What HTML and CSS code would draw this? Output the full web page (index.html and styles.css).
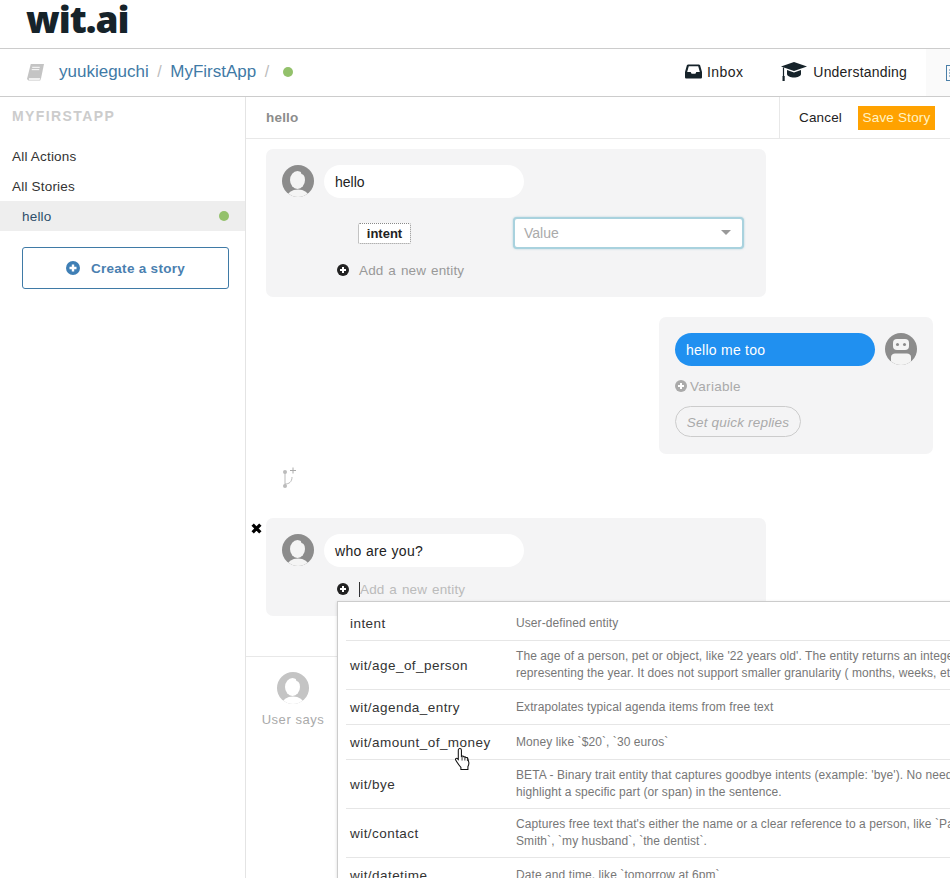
FILE: index.html
```html
<!DOCTYPE html>
<html lang="en">
<head>
<meta charset="utf-8">
<title>wit.ai</title>
<link rel="stylesheet" href="styles.css">
</head>
<body>
<header class="top"><span class="logo">wit.ai</span></header>
<nav class="subnav">
  <svg class="book" viewBox="0 0 20 18"><path d="M5 0h14l-3 14.500-1 3H2.500L1 16z" fill="#c4c4c4"/><path d="M3 15h12l-.6 1.800H3z" fill="#fff"/><path d="M6.500 3.500h8M6 6h8" stroke="#fff" stroke-width="1"/></svg>
  <a class="crumb">yuukieguchi</a><span class="slash">/</span><a class="crumb">MyFirstApp</a><span class="slash">/</span><span class="dot crumb-dot"></span>
  <div class="tabs">
    <span class="tab tab-inbox"><svg class="ic-inbox" viewBox="0 0 18 15"><path fill-rule="evenodd" d="M3.500 0h11c.7 0 1.200.4 1.500 1l2 7v5.500c0 .9-.6 1.500-1.500 1.500h-15C.6 15 0 14.400 0 13.500V8l2-7c.3-.6.800-1 1.500-1zM4 2 2.300 8H6l1 2h4l1-2h3.700L14 2z" fill="#16232a"/></svg>Inbox</span>
    <span class="tab tab-under"><svg class="ic-cap" viewBox="0 0 26 19"><path d="M13 0 26 4.500 13 9 0 4.500z" fill="#16232a"/><path d="M6 8v4c0 2 3.500 3.500 7 3.500s7-1.500 7-3.500V8l-7 2.500z" fill="#16232a"/><path d="M2.500 5.500v9" stroke="#16232a" stroke-width="1.200"/><rect x="1.500" y="14" width="2.200" height="5" fill="#16232a"/></svg>Understanding</span>
    <span class="tab-next"><svg class="ic-next" viewBox="0 0 12 16"><rect x=".5" y=".5" width="11" height="15" fill="none" stroke="#4a7fa8"/><path d="M3 5h3M3 8h6M3 11h4" stroke="#4a7fa8"/></svg></span>
  </div>
</nav>
<div class="layout">
  <aside class="side">
    <h2 class="app-name">MYFIRSTAPP</h2>
    <a class="side-link">All Actions</a>
    <a class="side-link">All Stories</a>
    <a class="side-link side-active"><span>hello</span><span class="dot"></span></a>
    <button class="create"><svg class="ic-plus" viewBox="0 0 14 14"><circle cx="7" cy="7" r="7" fill="#3f7fb5"/><path d="M7 3.500v7M3.500 7h7" stroke="#fff" stroke-width="2.400"/></svg>Create a story</button>
  </aside>
  <main class="main">
    <div class="story-head">
      <span class="story-title">hello</span>
      <div class="story-actions"><button class="cancel">Cancel</button><button class="save">Save Story</button></div>
    </div>
    <div class="story">
      <section class="card card-user">
        <div class="say">
          <svg class="avatar" viewBox="0 0 32 32"><defs><clipPath id="c1"><circle cx="16" cy="16" r="16"/></clipPath></defs><circle cx="16" cy="16" r="16" fill="#8c8c8c"/><g clip-path="url(#c1)"><ellipse cx="16" cy="32" rx="11" ry="7.500" fill="#f4f4f4"/><ellipse cx="15.500" cy="15" rx="7.500" ry="9" fill="#f4f4f4"/><circle cx="22" cy="6.500" r="3.200" fill="#8c8c8c"/></g></svg>
          <div class="chip">hello</div>
        </div>
        <div class="entity-row">
          <span class="tag">intent</span>
          <div class="value"><span>Value</span><i class="caret"></i></div>
        </div>
        <div class="add"><svg class="ic-add" viewBox="0 0 12 12"><circle cx="6" cy="6" r="6" fill="#222"/><path d="M6 3v6M3 6h6" stroke="#fff" stroke-width="2"/></svg><span class="add-text">Add a new entity</span></div>
      </section>
      <section class="card card-bot">
        <div class="reply">
          <div class="bubble">hello me too</div>
          <svg class="avatar" viewBox="0 0 32 32"><defs><clipPath id="c2"><circle cx="16" cy="16" r="16"/></clipPath></defs><circle cx="16" cy="16" r="16" fill="#8c8c8c"/><g clip-path="url(#c2)"><rect x="8" y="6" width="16" height="11" rx="4" fill="#f4f4f4"/><circle cx="12.500" cy="11.500" r="1.500" fill="#8c8c8c"/><circle cx="19.500" cy="11.500" r="1.500" fill="#8c8c8c"/><path d="M6 33V24c0-2 2-3.500 4-3.500h12c2 0 4 1.500 4 3.500v9z" fill="#f4f4f4"/></g></svg>
        </div>
        <div class="variable"><svg class="ic-add" viewBox="0 0 12 12"><circle cx="6" cy="6" r="6" fill="#aaa"/><path d="M6 3v6M3 6h6" stroke="#fff" stroke-width="2"/></svg>Variable</div>
        <button class="quick">Set quick replies</button>
      </section>
      <svg class="branch" viewBox="0 0 16 24"><circle cx="3" cy="6" r="2" fill="#bbb"/><circle cx="3" cy="20" r="2" fill="#bbb"/><path d="M3 6v14M3 18c4 0 7-2 7-7" stroke="#bbb" fill="none"/><path d="M11 1.500v6M8 4.500h6" stroke="#aaa" fill="none"/></svg>
      <section class="card card-user card-open">
        <svg class="close" viewBox="0 0 10 10"><path d="M1.500 1.500l7 7M8.500 1.500l-7 7" stroke="#000" stroke-width="3"/></svg>
        <div class="say">
          <svg class="avatar" viewBox="0 0 32 32"><defs><clipPath id="c3"><circle cx="16" cy="16" r="16"/></clipPath></defs><circle cx="16" cy="16" r="16" fill="#8c8c8c"/><g clip-path="url(#c3)"><ellipse cx="16" cy="32" rx="11" ry="7.500" fill="#f4f4f4"/><ellipse cx="15.500" cy="15" rx="7.500" ry="9" fill="#f4f4f4"/><circle cx="22" cy="6.500" r="3.200" fill="#8c8c8c"/></g></svg>
          <div class="chip chip-q">who are you?</div>
        </div>
        <div class="add add-open"><svg class="ic-add" viewBox="0 0 12 12"><circle cx="6" cy="6" r="6" fill="#222"/><path d="M6 3v6M3 6h6" stroke="#fff" stroke-width="2"/></svg><i class="text-cursor"></i><span class="add-text add-faint">Add a new entity</span></div>
        <div class="menu">
          <div class="row row-1"><b>intent</b><p>User-defined entity</p></div>
          <div class="row"><b>wit/age_of_person</b><p>The age of a person, pet or object, like '22 years old'. The entity returns an integer representing the year. It does not support smaller granularity ( months, weeks, etc.)</p></div>
          <div class="row"><b>wit/agenda_entry</b><p>Extrapolates typical agenda items from free text</p></div>
          <div class="row"><b>wit/amount_of_money</b><p>Money like `$20`, `30 euros`</p></div>
          <div class="row"><b>wit/bye</b><p>BETA - Binary trait entity that captures goodbye intents (example: 'bye'). No need to highlight a specific part (or span) in the sentence.</p></div>
          <div class="row"><b>wit/contact</b><p>Captures free text that's either the name or a clear reference to a person, like `Paul Smith`, `my husband`, `the dentist`.</p></div>
          <div class="row"><b>wit/datetime</b><p>Date and time, like `tomorrow at 6pm`</p></div>
        </div>
        <svg class="hand" viewBox="1 1 15 22"><path d="M5.500 1.500c1 0 1.500.7 1.500 1.600V9l.6-.3c.9-.2 1.500.2 1.700.8.800-.4 1.600-.1 1.900.6.800-.3 1.700.1 1.900.9l.9 3.500c.3 1.500 0 3-.8 4.300v2.700H6.500v-2C5 18 3 15 1.500 12.500c-.6-1 .5-2.100 1.600-1.400L4 12V3.100c0-.9.500-1.600 1.500-1.600z" fill="#fff" stroke="#111" stroke-width="1"/><path d="M7.600 9v4M10.300 9.500v3.500M12.700 10.500v3" stroke="#111" stroke-width=".8"/></svg>
      </section>
    </div>
    <div class="palette">
      <svg class="avatar" viewBox="0 0 32 32"><defs><clipPath id="c4"><circle cx="16" cy="16" r="16"/></clipPath></defs><circle cx="16" cy="16" r="16" fill="#c4c4c4"/><g clip-path="url(#c4)"><ellipse cx="16" cy="32" rx="11" ry="7.500" fill="#fff"/><ellipse cx="15.500" cy="15" rx="7.500" ry="9" fill="#fff"/><circle cx="22" cy="6.500" r="3.200" fill="#c4c4c4"/></g></svg>
      <span class="palette-label">User says</span>
    </div>
  </main>
</div>
</body>
</html>
```
FILE: styles.css
```css
* { box-sizing: border-box; }
html, body { margin: 0; height: 878px; overflow: hidden; background: #fff; }
body { font-family: "Liberation Sans", Arial, sans-serif; font-size: 14px; color: #222; }
button { font-family: inherit; cursor: pointer; }
p { margin: 0; }

.top { height: 49px; border-bottom: 1px solid #ccc; padding-left: 26px; }
.logo { display: block; font-family: "Open Sans", sans-serif; font-weight: 800; font-size: 37px; line-height: 38px; color: #16232a; letter-spacing: -1px; }

.subnav { height: 48px; border-bottom: 1px solid #ccc; display: flex; align-items: center; padding: 0 0 0 26px; font-size: 17px; }
.book { width: 19px; height: 17px; margin-right: 14px; }
.crumb { color: #3f7aa6; margin-bottom: 2px; }
.slash { color: #bbb; margin: 0 8.500px 2px; font-size: 16px; }
.dot { display: inline-block; width: 10px; height: 10px; border-radius: 50%; background: #93c16b; }
.crumb-dot { margin-left: 5px; margin-bottom: 1px; }
.tabs { margin-left: auto; display: flex; align-items: center; align-self: stretch; font-size: 14px; color: #222; }
.tab { display: flex; align-items: center; margin-bottom: 2px; }
.tab-inbox { margin-right: 38px; letter-spacing: .4px; }
.tab-under { margin-right: 19px; letter-spacing: .2px; }
.ic-inbox { width: 17px; height: 15px; margin-right: 5px; }
.ic-cap { width: 26px; height: 19px; margin-right: 6px; }
.tab-next { width: 24px; align-self: stretch; background: #fafafa; padding-left: 20px; display: flex; align-items: center; overflow: hidden; }
.ic-next { width: 12px; height: 16px; flex: none; }

.layout { display: flex; height: 781px; }
.side { width: 246px; flex: none; border-right: 1px solid #e4e4e4; }
.app-name { margin: 0; padding: 10px 12px 0; height: 44px; font-size: 14px; line-height: 18px; letter-spacing: 1.400px; color: #ccc; font-weight: 700; }
.side-link { display: flex; justify-content: space-between; align-items: center; height: 30px; padding: 0 12px; font-size: 13.500px; color: #333; letter-spacing: .2px; }
.side-active { background: #eee; padding: 0 16px 0 22px; color: #2f4f6b; }
.create { display: flex; align-items: center; justify-content: center; margin: 16px 0 0 22px; width: 207px; height: 42px; background: #fff; border: 1px solid #3f7aa6; border-radius: 3px; color: #4a80b0; font-size: 13.500px; font-weight: 700; letter-spacing: .3px; }
.ic-plus { width: 14px; height: 14px; margin-right: 11px; }

.main { flex: 1; min-width: 0; display: flex; flex-direction: column; }
.story-head { height: 42px; flex: none; border-bottom: 1px solid #e8e8e8; display: flex; justify-content: space-between; align-items: stretch; padding-left: 20px; }
.story-title { align-self: center; font-weight: 700; font-size: 13.500px; color: #8c8c8c; letter-spacing: .2px; }
.story-actions { display: flex; align-items: center; border-left: 1px solid #e8e8e8; padding: 0 15px 0 12px; }
.cancel { border: 0; background: none; font-size: 13.500px; color: #222; padding: 0; margin: 0 16px 0 7px; letter-spacing: .15px; }
.save { border: 0; background: #ffa200; color: #fff3c4; font-size: 13.500px; height: 24px; width: 77px; padding: 0; letter-spacing: .2px; }

.story { padding: 10px 17px 40px 20px; border-bottom: 1px solid #e8e8e8; flex: none; }
.card { background: #f4f4f5; border-radius: 7px; position: relative; }
.card-user { width: 500px; padding: 16px; height: 148px; }
.card-open { height: 98px; }
.say { display: flex; align-items: flex-start; gap: 10px; }
.avatar { width: 32px; height: 32px; display: block; flex: none; }
.chip { width: 200px; height: 33px; background: #fff; border-radius: 17px; padding: 0 11px; line-height: 34px; font-size: 14px; color: #222; }
.chip-q { letter-spacing: .35px; }
.entity-row { display: flex; margin: 19px 0 0 76px; height: 31px; align-items: center; }
.tag { display: block; width: 53px; height: 21px; margin-top: 1px; border: 1px dotted #888; border-radius: 2px; background: #fff; font-weight: 700; font-size: 13px; line-height: 19px; text-align: center; color: #222; }
.value { margin-left: 102px; width: 231px; height: 32px; background: #fff; border: 2px solid #a9d2de; border-radius: 4px; box-shadow: 0 0 2px rgba(120,180,200,.6); display: flex; justify-content: space-between; align-items: center; padding: 0 11px 0 9px; color: #aaa; font-size: 14px; }
.caret { width: 0; height: 0; border: 5px solid transparent; border-top: 5px solid #999; border-bottom: 0; }
.add { display: flex; align-items: center; margin: 12px 0 0 55px; height: 20px; position: relative; }
.add-open { margin-top: 12px; }
.ic-add { width: 12px; height: 12px; flex: none; }
.add-text { margin-left: 10px; font-size: 13.500px; color: #999; letter-spacing: .15px; word-spacing: 1px; }
.add-faint { color: #bbb; margin-left: 0; }
.text-cursor { display: block; width: 1px; height: 15px; background: #333; margin-left: 10px; }

.card-bot { width: 274px; height: 137px; margin: 20px 0 0 393px; padding: 16px; }
.reply { display: flex; gap: 10px; align-items: flex-start; }
.bubble { width: 200px; height: 33px; border-radius: 17px; background: #2090f0; color: #fff; line-height: 35px; padding: 0 11px; font-size: 14px; letter-spacing: .25px; }
.variable { display: flex; align-items: center; gap: 3px; margin-top: 11px; height: 18px; color: #aaa; font-size: 13.500px; letter-spacing: .3px; }
.quick { display: block; margin-top: 11px; width: 126px; height: 31px; border-radius: 16px; border: 1px solid #ccc; background: none; color: #aaa; font-style: italic; font-size: 13.500px; padding: 2px 0 0; letter-spacing: .2px; }
.branch { display: block; width: 16px; height: 24px; margin: 12px 0 28px 16px; }
.close { position: absolute; left: -15px; top: 5px; width: 11px; height: 11px; }

.menu { position: absolute; left: 71px; top: 83px; width: 720px; background: #fff; border: 1px solid #ccc; box-shadow: 0 1px 3px rgba(0,0,0,.15); padding: 0 0 0 8px; }
.row { display: flex; align-items: center; min-height: 35px; padding: 7px 0; border-top: 1px solid #e6e6e6; }
.row-1 { border-top: 0; min-height: 38px; padding: 8px 0 4px; }
.row b { width: 170px; flex: none; padding-left: 4px; font-weight: 400; font-size: 13.500px; color: #333; letter-spacing: .45px; }
.row p { width: 455px; font-size: 12px; line-height: 17px; color: #777; letter-spacing: .08px; }
.hand { position: absolute; left: 189px; top: 230px; width: 16px; height: 23px; }

.palette { display: flex; flex-direction: column; align-items: center; width: 94px; padding-top: 15px; }
.palette-label { margin-top: 8px; color: #aaa; font-size: 13px; letter-spacing: .55px; }
```
